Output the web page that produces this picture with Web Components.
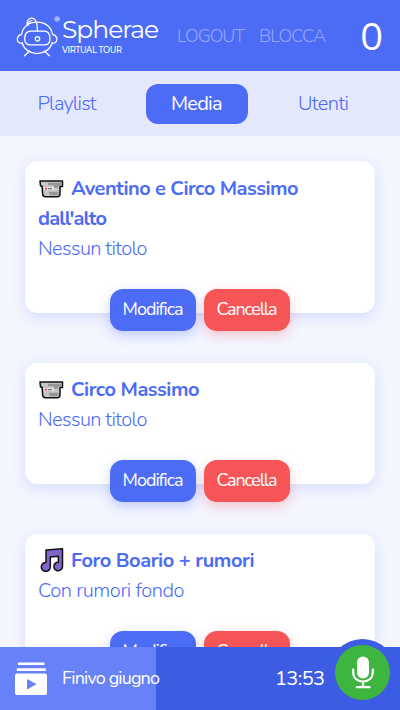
<!DOCTYPE html>
<html lang="it">
<head>
<meta charset="utf-8">
<title>Spherae Virtual Tour</title>
<style>
html,body{margin:0;height:100%;overflow:hidden}
body{font-family:Nunito,Lato,"Liberation Sans",sans-serif;font-weight:340;font-size:20px;line-height:30px;color:#4d6cf6}
</style>
</head>
<body>
<tour-app></tour-app>
<script>
const define = (name, html, setup) => customElements.define(name, class extends HTMLElement {
  connectedCallback() {
    if (this.shadowRoot) return;
    const t = document.createElement('template');
    t.innerHTML = html;
    this.attachShadow({mode: 'open'}).append(t.content.cloneNode(true));
    if (setup) setup(this, this.shadowRoot);
  }
});

/* A single line of text whose tracking is adjusted to fill a given width. */
define('fit-text', `<style>:host{display:inline-block;white-space:pre}span{display:inline-block}</style><span><slot></slot></span>`, (el, root) => {
  const w = parseFloat(el.getAttribute('w'));
  const span = root.querySelector('span');
  el.style.width = w + 'px';
  const n = el.textContent.length;
  const natural = span.getBoundingClientRect().width;
  span.style.letterSpacing = (w - natural) / Math.max(1, n - 1) + 'px';
});

define('tour-logo', `<style>
:host{display:flex;width:146px;height:44px;color:#fff}
svg{width:46px;height:44px;flex:none}
.words{display:flex;flex-direction:column;font-family:Montserrat,Inter,sans-serif}
.name{font-size:25px;line-height:30px;font-weight:400;height:30px}
.sub{font-size:8.300px;line-height:10px;font-weight:500;height:10px;margin-top:1px}
</style>
<svg viewBox="0 0 46 44" fill="none" stroke="#fff" stroke-width="1.250" stroke-linecap="round" stroke-linejoin="round">
<path d="M5.600 20C7.200 12.500 13 8 21 8s14 4.500 15.500 12M6 28.500C8 35.500 14 39.500 21 39.500s13.300-4 15.200-11"/>
<path d="M11 11c0-4 1.700-7 4.800-7 3.500 0 5.600 4 5.700 13.200M11.800 11.500c.4-3 1.800-4.600 4-5"/>
<path d="M15 17.200h13c4 0 6 3 6 7.200 0 4-2 6.500-6 6.500H15c-4 0-6.300-2.500-6.300-6.500 0-4.200 2.300-7.200 6.300-7.200Z"/>
<path d="M5.500 20.300C3 21 1.300 23 1.300 25.300s1.700 3.800 4.500 4.200M36.600 20.300c2.500.7 4.300 2.700 4.300 5s-1.800 3.800-4.500 4.200M13.500 37.200l-5 4.600M28.500 37.200l5 4.600"/>
<circle cx="21.500" cy="24.800" r="2.200"/><circle cx="41" cy="5" r="2.300" stroke-width=".6"/><path d="M40.300 6.200V3.900h1a.6.6 0 0 1 0 1.200h-1m1 0 .5.900" stroke-width=".5"/>
</svg>
<div class="words"><fit-text class="name" w="97">Spherae</fit-text><fit-text class="sub" w="60">VIRTUAL TOUR</fit-text></div>`);

define('top-bar', `<style>
:host{display:flex;align-items:center;box-sizing:border-box;height:71px;padding:0 18px 0 16px;background:#4d6cf6;color:#fff;flex:none}
nav{display:flex;gap:14px;margin-left:15px;font-size:18px;color:#94a7fa}
.count{font-size:38px;margin:5px -1px 0 auto;line-height:46px;font-weight:400}
</style><tour-logo></tour-logo><nav><fit-text w="68">LOGOUT</fit-text><fit-text w="67">BLOCCA</fit-text></nav><div class="count">0</div>`);

define('tab-bar', `<style>
:host{display:flex;justify-content:space-between;align-items:center;box-sizing:border-box;height:65.300px;padding:0 25px 0 24.500px;background:#e4e8fd;flex:none}
span{display:flex;align-items:center;height:40px;padding:0 13px;border-radius:12px}
.on{background:#4d6cf6;color:#fff;padding:0 25px;font-weight:400;margin-left:-1px}
.last{padding-right:26px}
</style><span><fit-text w="59">Playlist</fit-text></span><span class="on"><fit-text w="51.5">Media</fit-text></span><span class="last"><fit-text w="51">Utenti</fit-text></span>`);

define('action-button', `<style>
:host{display:flex;align-items:center;justify-content:center;box-sizing:border-box;width:86px;height:42px;padding-bottom:2px;border-radius:13px;background:#4d6cf6;color:#fff;font-size:18px;font-weight:380;box-shadow:0 4px 12px #4d6cf650}
:host([danger]){background:#f65557;box-shadow:0 4px 12px #f6555750}
</style><slot></slot>`);

const icons = {
video: `<svg width="25" height="18" viewBox="0 0 25 18" style="margin-top:-6px;transform:translateY(-2px)"><path d="M1 1h22.500v5.500H21V14q0 2.700-2.700 2.700H6.500Q3.700 16.700 3.700 14L3 6H1.500Z" fill="#c4c6c7" stroke="#111" stroke-width="1.500" stroke-linejoin="round"/><path d="M9 2.800h13.300V6H19v1.800h-4V5.300H9Z" fill="#949697"/><path d="M5 7h10v3H5Z" fill="#e4e6e7"/><path d="M9.500 11.700h10v2q0 1.500-1.500 1.500h-7Z" fill="#949697"/><path d="M9 8.700h4" stroke="#555"/><circle cx="7" cy="8.700" r="1.100" fill="#f33c36"/></svg>`,
music: `<svg width="25" height="24" viewBox="0 0 25 24"><path fill-rule="evenodd" d="M7 2 23.500.800V18.500a4.300 4.300 0 1 1-4.200-4.300V8.200l-8 .700v10a4.500 4.500 0 1 1-4.300-4.500Z" fill="#8064c7" stroke="#101018" stroke-width="1.500" stroke-linejoin="round"/></svg>`
};
define('media-card', `<style>
:host{display:block;box-sizing:border-box;padding:12.500px 13px 0;background:#fff;border-radius:12.500px;box-shadow:0 4px 13px #4d6cf62b;flex:none}
.title{font-weight:700;min-height:30px}
.icon{display:inline-flex;width:33px;height:24px;align-items:center;vertical-align:-5px;margin:-6px 0;padding-left:1px;box-sizing:border-box}
.actions{display:flex;justify-content:center;gap:8px;margin-top:25px}
</style><div class="title"><span class="icon"></span><slot name="title"></slot></div><slot name="text"></slot>
<div class="actions"><action-button><fit-text w="61">Modifica</fit-text></action-button><action-button danger><fit-text w="61">Cancella</fit-text></action-button></div>`, (el, root) => {
  root.querySelector('.icon').innerHTML = icons[el.getAttribute('kind')];
});

define('player-bar', `<style>
:host{display:flex;align-items:center;box-sizing:border-box;height:62.600px;padding:0 10px 0 15px;color:#fff;flex:none;position:relative;z-index:2;background:linear-gradient(90deg,#6682f6 156px,#3c5ce3 156px)}
.list{width:32px;height:33px;flex:none}
.name{font-size:18px;margin:-2px 0 0 15px;font-weight:380}
.time{margin-left:auto;font-weight:380}
.mic{width:55px;height:55px;border-radius:50%;background:#3db53e;box-shadow:0 0 0 6px #3c5ce3;margin:-13px 0 0 10px;display:flex;align-items:center;justify-content:center}
</style>
<svg class="list" viewBox="0 0 32 33"><path d="M3 1.800h26.500M1.800 7.600h29" stroke="#fff" stroke-width="2.600"/><path fill="#fff" d="M2 11.500h28a2 2 0 0 1 2 2V31a2 2 0 0 1-2 2H2a2 2 0 0 1-2-2V13.500a2 2 0 0 1 2-2Z"/><path d="M12 17v10.600l9.500-5.300Z" fill="#6682f6"/></svg>
<fit-text class="name" w="98">Finivo giugno</fit-text><fit-text class="time" w="50">13:53</fit-text>
<div class="mic"><svg width="24" height="33" viewBox="0 0 24 33"><rect x="6" y=".500" width="12" height="22" rx="6" fill="#fff"/><path d="M2.200 13.500v2.500c0 6 4 9.500 9.800 9.500s9.800-3.500 9.800-9.500v-2.500M12 26v5M5.800 31.200h12.800" fill="none" stroke="#fff" stroke-width="2.200" stroke-linecap="round"/></svg></div>`);

define('tour-app', `<style>
:host{display:flex;flex-direction:column;height:710px;width:400px;overflow:hidden;background:#f3f5ff}
main{flex:1;min-height:0;display:flex;flex-direction:column;gap:50px;padding:25px 25px 0;overflow:hidden}
media-card{height:121.100px}media-card.tall{height:151.300px}
.line{display:block}
</style><top-bar></top-bar><tab-bar></tab-bar>
<main>
<media-card class="tall" kind="video"><fit-text slot="title" w="227.5">Aventino e Circo Massimo</fit-text><fit-text slot="title" w="69" class="line">dall'alto</fit-text><fit-text slot="text" w="109.5">Nessun titolo</fit-text></media-card>
<media-card kind="video"><fit-text slot="title" w="128.5">Circo Massimo</fit-text><fit-text slot="text" w="109.5">Nessun titolo</fit-text></media-card>
<media-card kind="music"><fit-text slot="title" w="183.5">Foro Boario + rumori</fit-text><fit-text slot="text" w="146.5">Con rumori fondo</fit-text></media-card>
</main><player-bar></player-bar>`);
</script>
</body>
</html>
